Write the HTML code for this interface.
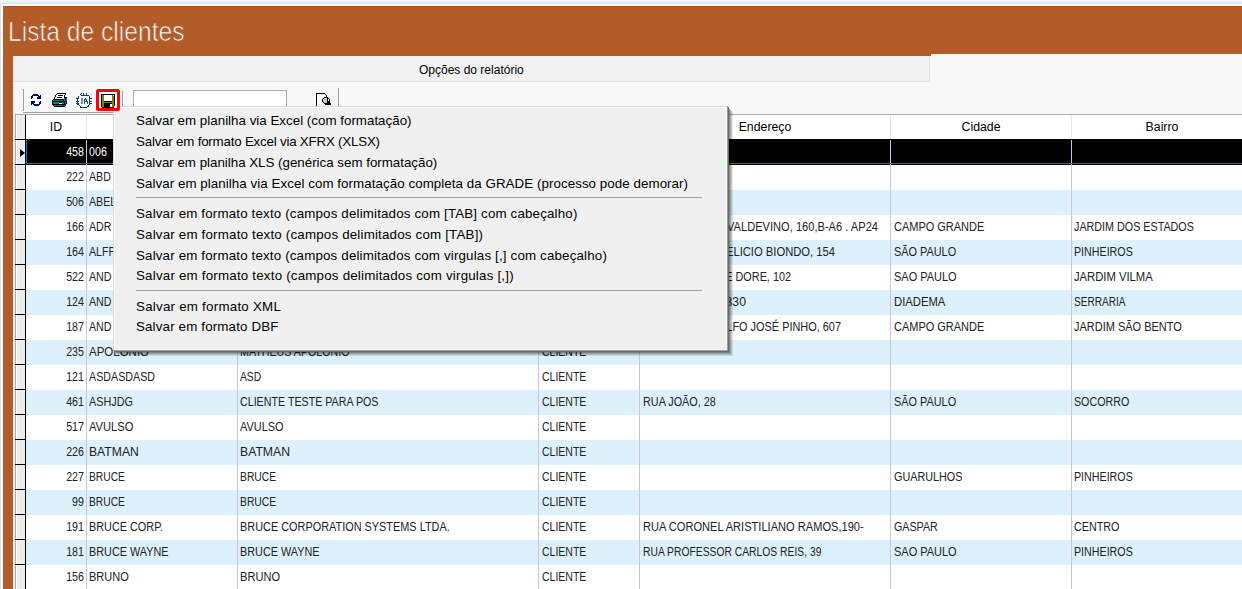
<!DOCTYPE html>
<html><head><meta charset="utf-8">
<style>
html,body{margin:0;padding:0}
body{width:1242px;height:589px;position:relative;overflow:hidden;background:#fff;font-family:"Liberation Sans",sans-serif}
.a{position:absolute}
.ln{position:absolute;height:1px}
.vl{position:absolute;width:1px}
.c{position:absolute;height:24px;line-height:24px;font-size:12px;color:#222;white-space:nowrap;letter-spacing:0px;transform:scaleX(0.89);transform-origin:0 0}
.r{text-align:right;transform-origin:100% 0}
.hd{position:absolute;top:114.5px;height:24px;line-height:24px;font-size:12.3px;color:#000;text-align:center;white-space:nowrap}
.mi{position:absolute;left:136px;font-size:13.35px;color:#000;white-space:nowrap;line-height:16px;letter-spacing:0px}
</style></head><body>

<div class="ln" style="left:0;top:0;width:1242px;background:#fdfdfd"></div>
<div class="a" style="left:0;top:1px;width:1242px;height:2px;background:#efefef"></div>
<div class="ln" style="left:0;top:3px;width:1242px;background:#e1e1e1"></div>
<div class="a" style="left:0;top:4px;width:1242px;height:2px;background:#fcfeff"></div>
<div class="vl" style="left:0;top:3px;height:586px;background:#e1e1e1"></div>
<div class="a" style="left:3px;top:6px;width:1239px;height:583px;background:#b25c2a"></div>
<div class="ln" style="left:3px;top:6px;width:1239px;background:#ad5019"></div>
<div class="a" id="title" style="left:8.1px;top:17.3px;font-size:27.5px;line-height:30px;color:#fff;white-space:nowrap;letter-spacing:0px;-webkit-text-stroke:0.7px #b25c2a;transform:scaleX(0.895);transform-origin:0 0">Lista de clientes</div>
<div class="a" style="left:13px;top:54px;width:1229px;height:535px;background:#f8f8f8"></div>
<div class="a" style="left:13px;top:54px;width:918px;height:2px;background:#b25c2a"></div>
<div class="a" style="left:13px;top:56px;width:916px;height:25px;background:#f2f2f2;border-right:1px solid #e3e3e3;border-bottom:1px solid #e3e3e3"></div>
<div class="a" id="tabtxt" style="left:419px;top:63px;font-size:12px;line-height:14px;color:#000;white-space:nowrap">Opções do relatório</div>
<div class="a" style="left:13px;top:82px;width:2px;height:507px;background:#f6f7f8"></div>
<div class="vl" style="left:23px;top:89px;height:22px;background:#a0a0a0"></div>
<div class="ln" style="left:23px;top:112px;width:320px;background:#a0a0a0"></div>
<div class="vl" style="left:122px;top:91px;height:15px;background:#a0a0a0"></div>
<div class="vl" style="left:338px;top:88px;height:18px;background:#a0a0a0"></div>
<div class="a" style="left:133px;top:90px;width:152px;height:30px;background:#fff;border:1px solid #a9acb5"></div>
<svg class="a" style="left:0;top:0" width="400" height="120" shape-rendering="crispEdges"><rect x="33" y="94" width="5" height="1" fill="#000080"/><rect x="32" y="95" width="7" height="1" fill="#000080"/><rect x="40" y="95" width="1" height="1" fill="#000080"/><rect x="31" y="96" width="2" height="1" fill="#000080"/><rect x="38" y="96" width="3" height="1" fill="#000080"/><rect x="31" y="97" width="2" height="1" fill="#000080"/><rect x="37" y="97" width="4" height="1" fill="#000080"/><rect x="31" y="98" width="1" height="1" fill="#000080"/><rect x="37" y="98" width="4" height="1" fill="#000080"/><rect x="31" y="101" width="4" height="1" fill="#000080"/><rect x="40" y="101" width="1" height="1" fill="#000080"/><rect x="31" y="102" width="4" height="1" fill="#000080"/><rect x="39" y="102" width="2" height="1" fill="#000080"/><rect x="31" y="103" width="3" height="1" fill="#000080"/><rect x="39" y="103" width="2" height="1" fill="#000080"/><rect x="31" y="104" width="1" height="1" fill="#000080"/><rect x="33" y="104" width="7" height="1" fill="#000080"/><rect x="34" y="105" width="5" height="1" fill="#000080"/><rect x="57" y="93" width="9" height="1" fill="#000"/><rect x="56" y="94" width="1" height="1" fill="#000"/><rect x="57" y="94" width="8" height="1" fill="#fff"/><rect x="65" y="94" width="1" height="1" fill="#000"/><rect x="55" y="95" width="1" height="1" fill="#000"/><rect x="56" y="95" width="2" height="1" fill="#fff"/><rect x="58" y="95" width="5" height="1" fill="#000"/><rect x="63" y="95" width="1" height="1" fill="#fff"/><rect x="64" y="95" width="1" height="1" fill="#000"/><rect x="55" y="96" width="1" height="1" fill="#000"/><rect x="56" y="96" width="8" height="1" fill="#fff"/><rect x="64" y="96" width="1" height="1" fill="#000"/><rect x="54" y="97" width="1" height="1" fill="#000"/><rect x="55" y="97" width="2" height="1" fill="#fff"/><rect x="57" y="97" width="5" height="1" fill="#000"/><rect x="62" y="97" width="2" height="1" fill="#fff"/><rect x="64" y="97" width="3" height="1" fill="#000"/><rect x="54" y="98" width="1" height="1" fill="#000"/><rect x="55" y="98" width="9" height="1" fill="#fff"/><rect x="64" y="98" width="1" height="1" fill="#008080"/><rect x="65" y="98" width="1" height="1" fill="#000"/><rect x="66" y="98" width="1" height="1" fill="#008080"/><rect x="53" y="99" width="11" height="1" fill="#000"/><rect x="64" y="99" width="1" height="1" fill="#008080"/><rect x="65" y="99" width="1" height="1" fill="#000"/><rect x="66" y="99" width="1" height="1" fill="#008080"/><rect x="52" y="100" width="1" height="1" fill="#000"/><rect x="53" y="100" width="10" height="1" fill="#008080"/><rect x="63" y="100" width="1" height="1" fill="#000"/><rect x="64" y="100" width="1" height="1" fill="#008080"/><rect x="65" y="100" width="1" height="1" fill="#000"/><rect x="66" y="100" width="1" height="1" fill="#008080"/><rect x="52" y="101" width="13" height="1" fill="#000"/><rect x="65" y="101" width="1" height="1" fill="#008080"/><rect x="66" y="101" width="1" height="1" fill="#000"/><rect x="52" y="102" width="1" height="1" fill="#000"/><rect x="53" y="102" width="6" height="1" fill="#008080"/><rect x="59" y="102" width="3" height="1" fill="#000"/><rect x="62" y="102" width="2" height="1" fill="#008080"/><rect x="64" y="102" width="1" height="1" fill="#000"/><rect x="65" y="102" width="1" height="1" fill="#008080"/><rect x="66" y="102" width="1" height="1" fill="#000"/><rect x="52" y="103" width="1" height="1" fill="#000"/><rect x="53" y="103" width="6" height="1" fill="#008080"/><rect x="59" y="103" width="3" height="1" fill="#ffff00"/><rect x="62" y="103" width="2" height="1" fill="#008080"/><rect x="64" y="103" width="1" height="1" fill="#000"/><rect x="65" y="103" width="1" height="1" fill="#008080"/><rect x="66" y="103" width="1" height="1" fill="#000"/><rect x="52" y="104" width="14" height="1" fill="#000"/><rect x="53" y="105" width="1" height="1" fill="#000"/><rect x="54" y="105" width="9" height="1" fill="#008080"/><rect x="63" y="105" width="1" height="1" fill="#000"/><rect x="64" y="105" width="1" height="1" fill="#008080"/><rect x="65" y="105" width="1" height="1" fill="#000"/><rect x="54" y="106" width="11" height="1" fill="#000"/></svg><svg class="a" style="left:0;top:0" width="100" height="110" shape-rendering="crispEdges"><rect x="81" y="93" width="1" height="1" fill="#0b3b7b"/><rect x="83" y="93" width="1" height="1" fill="#0b3b7b"/><rect x="86" y="93" width="1" height="1" fill="#0b3b7b"/><rect x="80" y="94" width="1" height="1" fill="#0b3b7b"/><rect x="83" y="94" width="1" height="1" fill="#0b3b7b"/><rect x="86" y="94" width="1" height="1" fill="#0b3b7b"/><rect x="81" y="95" width="8" height="1" fill="#0b3b7b"/><rect x="78" y="96" width="1" height="1" fill="#0b3b7b"/><rect x="89" y="96" width="1" height="1" fill="#0b3b7b"/><rect x="78" y="97" width="1" height="1" fill="#0b3b7b"/><rect x="89" y="97" width="1" height="1" fill="#0b3b7b"/><rect x="76" y="98" width="3" height="1" fill="#0b3b7b"/><rect x="89" y="98" width="3" height="1" fill="#0b3b7b"/><rect x="77" y="99" width="1" height="1" fill="#0b3b7b"/><rect x="89" y="99" width="1" height="1" fill="#0b3b7b"/><rect x="77" y="100" width="1" height="1" fill="#0b3b7b"/><rect x="89" y="100" width="1" height="1" fill="#0b3b7b"/><rect x="76" y="101" width="3" height="1" fill="#0b3b7b"/><rect x="89" y="101" width="3" height="1" fill="#0b3b7b"/><rect x="77" y="102" width="1" height="1" fill="#0b3b7b"/><rect x="89" y="102" width="1" height="1" fill="#0b3b7b"/><rect x="76" y="103" width="3" height="1" fill="#0b3b7b"/><rect x="89" y="103" width="3" height="1" fill="#0b3b7b"/><rect x="77" y="104" width="2" height="1" fill="#0b3b7b"/><rect x="89" y="104" width="1" height="1" fill="#0b3b7b"/><rect x="79" y="105" width="1" height="1" fill="#0b3b7b"/><rect x="88" y="105" width="1" height="1" fill="#0b3b7b"/><rect x="80" y="106" width="1" height="1" fill="#0b3b7b"/><rect x="87" y="106" width="2" height="1" fill="#0b3b7b"/><rect x="80" y="107" width="7" height="1" fill="#0b3b7b"/><rect x="81" y="98" width="2" height="1" fill="#6c92c2"/><rect x="85" y="98" width="1" height="1" fill="#24548f"/><rect x="81" y="99" width="2" height="1" fill="#6c92c2"/><rect x="84" y="99" width="3" height="1" fill="#24548f"/><rect x="81" y="100" width="2" height="1" fill="#6c92c2"/><rect x="84" y="100" width="1" height="1" fill="#24548f"/><rect x="86" y="100" width="1" height="1" fill="#24548f"/><rect x="81" y="101" width="2" height="1" fill="#6c92c2"/><rect x="84" y="101" width="4" height="1" fill="#24548f"/><rect x="81" y="102" width="2" height="1" fill="#6c92c2"/><rect x="84" y="102" width="1" height="1" fill="#24548f"/><rect x="87" y="102" width="1" height="1" fill="#24548f"/><rect x="81" y="103" width="2" height="1" fill="#6c92c2"/><rect x="84" y="103" width="1" height="1" fill="#24548f"/><rect x="87" y="103" width="1" height="1" fill="#24548f"/></svg><svg class="a" style="left:0;top:0" width="340" height="110" shape-rendering="crispEdges"><rect x="316" y="93" width="9" height="1" fill="#000"/><rect x="316" y="94" width="1" height="1" fill="#000"/><rect x="325" y="94" width="1" height="1" fill="#000"/><rect x="316" y="95" width="1" height="1" fill="#000"/><rect x="325" y="95" width="1" height="1" fill="#fff"/><rect x="326" y="95" width="1" height="1" fill="#000"/><rect x="316" y="96" width="1" height="1" fill="#000"/><rect x="326" y="96" width="1" height="1" fill="#000"/><rect x="316" y="97" width="1" height="1" fill="#000"/><rect x="324" y="97" width="4" height="1" fill="#000"/><rect x="316" y="98" width="1" height="1" fill="#000"/><rect x="323" y="98" width="1" height="1" fill="#000"/><rect x="324" y="98" width="1" height="1" fill="#d8c4c4"/><rect x="325" y="98" width="1" height="1" fill="#00ffff"/><rect x="326" y="98" width="1" height="1" fill="#d8c4c4"/><rect x="327" y="98" width="2" height="1" fill="#000"/><rect x="316" y="99" width="1" height="1" fill="#000"/><rect x="322" y="99" width="1" height="1" fill="#000"/><rect x="323" y="99" width="1" height="1" fill="#d8c4c4"/><rect x="324" y="99" width="1" height="1" fill="#00ffff"/><rect x="325" y="99" width="2" height="1" fill="#d8c4c4"/><rect x="327" y="99" width="1" height="1" fill="#000"/><rect x="328" y="99" width="1" height="1" fill="#fff"/><rect x="329" y="99" width="1" height="1" fill="#000"/><rect x="316" y="100" width="1" height="1" fill="#000"/><rect x="322" y="100" width="1" height="1" fill="#000"/><rect x="323" y="100" width="4" height="1" fill="#d8c4c4"/><rect x="327" y="100" width="1" height="1" fill="#000"/><rect x="328" y="100" width="1" height="1" fill="#fff"/><rect x="329" y="100" width="1" height="1" fill="#000"/><rect x="316" y="101" width="1" height="1" fill="#000"/><rect x="322" y="101" width="1" height="1" fill="#000"/><rect x="323" y="101" width="3" height="1" fill="#d8c4c4"/><rect x="326" y="101" width="1" height="1" fill="#00ffff"/><rect x="327" y="101" width="3" height="1" fill="#000"/><rect x="316" y="102" width="1" height="1" fill="#000"/><rect x="323" y="102" width="1" height="1" fill="#000"/><rect x="324" y="102" width="1" height="1" fill="#d8c4c4"/><rect x="325" y="102" width="1" height="1" fill="#00ffff"/><rect x="326" y="102" width="1" height="1" fill="#d8c4c4"/><rect x="327" y="102" width="3" height="1" fill="#000"/><rect x="316" y="103" width="1" height="1" fill="#000"/><rect x="324" y="103" width="7" height="1" fill="#000"/><rect x="316" y="104" width="1" height="1" fill="#000"/><rect x="325" y="104" width="6" height="1" fill="#000"/><rect x="316" y="105" width="1" height="1" fill="#000"/></svg>
<div class="ln" style="left:15px;top:114px;width:1227px;background:#a9adb2"></div>
<div class="vl" style="left:15px;top:114px;height:475px;background:#a9adb2"></div>
<div class="a" style="left:16px;top:115px;width:9px;height:474px;background:#ececec"></div>
<div class="vl" style="left:16px;top:115px;height:474px;background:#fff"></div>
<div class="vl" style="left:25px;top:115px;height:474px;background:#000"></div>
<div class="a" style="left:26px;top:115px;width:1216px;height:474px;background:#fff"></div>
<div class="vl" style="left:86px;top:115px;height:24px;background:#e6e6e6"></div>
<div class="vl" style="left:237px;top:115px;height:24px;background:#e6e6e6"></div>
<div class="vl" style="left:538px;top:115px;height:24px;background:#e6e6e6"></div>
<div class="vl" style="left:639px;top:115px;height:24px;background:#e6e6e6"></div>
<div class="vl" style="left:890px;top:115px;height:24px;background:#e6e6e6"></div>
<div class="vl" style="left:1071px;top:115px;height:24px;background:#e6e6e6"></div>
<div class="ln" style="left:15px;top:139px;width:1227px;background:#000"></div>
<div class="hd" style="left:26px;width:60px">ID</div>
<div class="hd" style="left:87px;width:150px">Nome</div>
<div class="hd" style="left:238px;width:300px">Razão social</div>
<div class="hd" style="left:539px;width:100px">Tipo</div>
<div class="hd" style="left:640px;width:250px">Endereço</div>
<div class="hd" style="left:891px;width:180px">Cidade</div>
<div class="hd" style="left:1072px;width:180px">Bairro</div>
<div class="a" style="left:26px;top:140px;width:1216px;height:25px;background:#000"></div>
<div class="ln" style="left:15px;top:164px;width:10px;background:#000"></div>
<div class="vl" style="left:86px;top:140px;height:25px;background:#c9c3e8"></div>
<div class="vl" style="left:237px;top:140px;height:25px;background:#c9c3e8"></div>
<div class="vl" style="left:538px;top:140px;height:25px;background:#c9c3e8"></div>
<div class="vl" style="left:639px;top:140px;height:25px;background:#c9c3e8"></div>
<div class="vl" style="left:890px;top:140px;height:25px;background:#c9c3e8"></div>
<div class="vl" style="left:1071px;top:140px;height:25px;background:#c9c3e8"></div>
<div class="c r" style="left:26px;width:58px;top:140px;color:#fff">458</div>
<div class="c" style="left:89px;top:140px;transform:scaleX(0.8900);color:#fff">006</div>
<div class="ln" style="left:15px;top:189px;width:10px;background:#000"></div>
<div class="vl" style="left:86px;top:165px;height:25px;background:#c9c3e8"></div>
<div class="vl" style="left:237px;top:165px;height:25px;background:#c9c3e8"></div>
<div class="vl" style="left:538px;top:165px;height:25px;background:#c9c3e8"></div>
<div class="vl" style="left:639px;top:165px;height:25px;background:#c9c3e8"></div>
<div class="vl" style="left:890px;top:165px;height:25px;background:#c9c3e8"></div>
<div class="vl" style="left:1071px;top:165px;height:25px;background:#c9c3e8"></div>
<div class="c r" style="left:26px;width:58px;top:165px">222</div>
<div class="c" style="left:89px;top:165px;transform:scaleX(0.8900)">ABD</div>
<div class="a" style="left:26px;top:190px;width:1216px;height:25px;background:#ddf1fc"></div>
<div class="ln" style="left:15px;top:214px;width:10px;background:#000"></div>
<div class="vl" style="left:86px;top:190px;height:25px;background:#c9c3e8"></div>
<div class="vl" style="left:237px;top:190px;height:25px;background:#c9c3e8"></div>
<div class="vl" style="left:538px;top:190px;height:25px;background:#c9c3e8"></div>
<div class="vl" style="left:639px;top:190px;height:25px;background:#c9c3e8"></div>
<div class="vl" style="left:890px;top:190px;height:25px;background:#c9c3e8"></div>
<div class="vl" style="left:1071px;top:190px;height:25px;background:#c9c3e8"></div>
<div class="c r" style="left:26px;width:58px;top:190px">506</div>
<div class="c" style="left:89px;top:190px;transform:scaleX(0.8900)">ABEL</div>
<div class="ln" style="left:15px;top:239px;width:10px;background:#000"></div>
<div class="vl" style="left:86px;top:215px;height:25px;background:#c9c3e8"></div>
<div class="vl" style="left:237px;top:215px;height:25px;background:#c9c3e8"></div>
<div class="vl" style="left:538px;top:215px;height:25px;background:#c9c3e8"></div>
<div class="vl" style="left:639px;top:215px;height:25px;background:#c9c3e8"></div>
<div class="vl" style="left:890px;top:215px;height:25px;background:#c9c3e8"></div>
<div class="vl" style="left:1071px;top:215px;height:25px;background:#c9c3e8"></div>
<div class="c r" style="left:26px;width:58px;top:215px">166</div>
<div class="c" style="left:89px;top:215px;transform:scaleX(0.8900)">ADR</div>
<div class="c" style="left:893.5px;top:215px;transform:scaleX(0.9152)">CAMPO GRANDE</div>
<div class="c" style="left:1074px;top:215px;transform:scaleX(0.8960)">JARDIM DOS ESTADOS</div>
<div class="c r" style="left:577.8px;width:300px;top:215px;transform:scaleX(0.9252)">RUA ANTONIO VALDEVINO, 160,B-A6 . AP24</div>
<div class="a" style="left:26px;top:240px;width:1216px;height:25px;background:#ddf1fc"></div>
<div class="ln" style="left:15px;top:264px;width:10px;background:#000"></div>
<div class="vl" style="left:86px;top:240px;height:25px;background:#c9c3e8"></div>
<div class="vl" style="left:237px;top:240px;height:25px;background:#c9c3e8"></div>
<div class="vl" style="left:538px;top:240px;height:25px;background:#c9c3e8"></div>
<div class="vl" style="left:639px;top:240px;height:25px;background:#c9c3e8"></div>
<div class="vl" style="left:890px;top:240px;height:25px;background:#c9c3e8"></div>
<div class="vl" style="left:1071px;top:240px;height:25px;background:#c9c3e8"></div>
<div class="c r" style="left:26px;width:58px;top:240px">164</div>
<div class="c" style="left:89px;top:240px;transform:scaleX(0.8900)">ALFF</div>
<div class="c" style="left:893.5px;top:240px;transform:scaleX(0.9074)">SÃO PAULO</div>
<div class="c" style="left:1074px;top:240px;transform:scaleX(0.8900)">PINHEIROS</div>
<div class="c r" style="left:535.4px;width:300px;top:240px;transform:scaleX(0.9345)">RUA FELICIO BIONDO, 154</div>
<div class="ln" style="left:15px;top:289px;width:10px;background:#000"></div>
<div class="vl" style="left:86px;top:265px;height:25px;background:#c9c3e8"></div>
<div class="vl" style="left:237px;top:265px;height:25px;background:#c9c3e8"></div>
<div class="vl" style="left:538px;top:265px;height:25px;background:#c9c3e8"></div>
<div class="vl" style="left:639px;top:265px;height:25px;background:#c9c3e8"></div>
<div class="vl" style="left:890px;top:265px;height:25px;background:#c9c3e8"></div>
<div class="vl" style="left:1071px;top:265px;height:25px;background:#c9c3e8"></div>
<div class="c r" style="left:26px;width:58px;top:265px">522</div>
<div class="c" style="left:89px;top:265px;transform:scaleX(0.8900)">AND</div>
<div class="c" style="left:893.5px;top:265px;transform:scaleX(0.9146)">SAO PAULO</div>
<div class="c" style="left:1074px;top:265px;transform:scaleX(0.9363)">JARDIM VILMA</div>
<div class="c r" style="left:491.20000000000005px;width:300px;top:265px;transform:scaleX(0.9042)">RUA JOSE DORE, 102</div>
<div class="a" style="left:26px;top:290px;width:1216px;height:25px;background:#ddf1fc"></div>
<div class="ln" style="left:15px;top:314px;width:10px;background:#000"></div>
<div class="vl" style="left:86px;top:290px;height:25px;background:#c9c3e8"></div>
<div class="vl" style="left:237px;top:290px;height:25px;background:#c9c3e8"></div>
<div class="vl" style="left:538px;top:290px;height:25px;background:#c9c3e8"></div>
<div class="vl" style="left:639px;top:290px;height:25px;background:#c9c3e8"></div>
<div class="vl" style="left:890px;top:290px;height:25px;background:#c9c3e8"></div>
<div class="vl" style="left:1071px;top:290px;height:25px;background:#c9c3e8"></div>
<div class="c r" style="left:26px;width:58px;top:290px">124</div>
<div class="c" style="left:89px;top:290px;transform:scaleX(0.8900)">AND</div>
<div class="c" style="left:893.5px;top:290px;transform:scaleX(0.9388)">DIADEMA</div>
<div class="c" style="left:1074px;top:290px;transform:scaleX(0.8383)">SERRARIA</div>
<div class="c r" style="left:446.4px;width:300px;top:290px;transform:scaleX(1.0211)">RUA DAS FLORES, 330</div>
<div class="ln" style="left:15px;top:339px;width:10px;background:#000"></div>
<div class="vl" style="left:86px;top:315px;height:25px;background:#c9c3e8"></div>
<div class="vl" style="left:237px;top:315px;height:25px;background:#c9c3e8"></div>
<div class="vl" style="left:538px;top:315px;height:25px;background:#c9c3e8"></div>
<div class="vl" style="left:639px;top:315px;height:25px;background:#c9c3e8"></div>
<div class="vl" style="left:890px;top:315px;height:25px;background:#c9c3e8"></div>
<div class="vl" style="left:1071px;top:315px;height:25px;background:#c9c3e8"></div>
<div class="c r" style="left:26px;width:58px;top:315px">187</div>
<div class="c" style="left:89px;top:315px;transform:scaleX(0.8900)">AND</div>
<div class="c" style="left:893.5px;top:315px;transform:scaleX(0.9152)">CAMPO GRANDE</div>
<div class="c" style="left:1074px;top:315px;transform:scaleX(0.9148)">JARDIM SÃO BENTO</div>
<div class="c r" style="left:540.7px;width:300px;top:315px;transform:scaleX(0.9096)">RUA ADOLFO JOSÉ PINHO, 607</div>
<div class="a" style="left:26px;top:340px;width:1216px;height:25px;background:#ddf1fc"></div>
<div class="ln" style="left:15px;top:364px;width:10px;background:#000"></div>
<div class="vl" style="left:86px;top:340px;height:25px;background:#c9c3e8"></div>
<div class="vl" style="left:237px;top:340px;height:25px;background:#c9c3e8"></div>
<div class="vl" style="left:538px;top:340px;height:25px;background:#c9c3e8"></div>
<div class="vl" style="left:639px;top:340px;height:25px;background:#c9c3e8"></div>
<div class="vl" style="left:890px;top:340px;height:25px;background:#c9c3e8"></div>
<div class="vl" style="left:1071px;top:340px;height:25px;background:#c9c3e8"></div>
<div class="c r" style="left:26px;width:58px;top:340px">235</div>
<div class="c" style="left:89px;top:340px;transform:scaleX(0.9580)">APOLONIO</div>
<div class="c" style="left:240px;top:340px;transform:scaleX(0.8900)">MATHEUS APOLONIO</div>
<div class="c" style="left:541.5px;top:340px;transform:scaleX(0.8745)">CLIENTE</div>
<div class="ln" style="left:15px;top:389px;width:10px;background:#000"></div>
<div class="vl" style="left:86px;top:365px;height:25px;background:#c9c3e8"></div>
<div class="vl" style="left:237px;top:365px;height:25px;background:#c9c3e8"></div>
<div class="vl" style="left:538px;top:365px;height:25px;background:#c9c3e8"></div>
<div class="vl" style="left:639px;top:365px;height:25px;background:#c9c3e8"></div>
<div class="vl" style="left:890px;top:365px;height:25px;background:#c9c3e8"></div>
<div class="vl" style="left:1071px;top:365px;height:25px;background:#c9c3e8"></div>
<div class="c r" style="left:26px;width:58px;top:365px">121</div>
<div class="c" style="left:89px;top:365px;transform:scaleX(0.8928)">ASDASDASD</div>
<div class="c" style="left:240px;top:365px;transform:scaleX(0.8583)">ASD</div>
<div class="c" style="left:541.5px;top:365px;transform:scaleX(0.8745)">CLIENTE</div>
<div class="a" style="left:26px;top:390px;width:1216px;height:25px;background:#ddf1fc"></div>
<div class="ln" style="left:15px;top:414px;width:10px;background:#000"></div>
<div class="vl" style="left:86px;top:390px;height:25px;background:#c9c3e8"></div>
<div class="vl" style="left:237px;top:390px;height:25px;background:#c9c3e8"></div>
<div class="vl" style="left:538px;top:390px;height:25px;background:#c9c3e8"></div>
<div class="vl" style="left:639px;top:390px;height:25px;background:#c9c3e8"></div>
<div class="vl" style="left:890px;top:390px;height:25px;background:#c9c3e8"></div>
<div class="vl" style="left:1071px;top:390px;height:25px;background:#c9c3e8"></div>
<div class="c r" style="left:26px;width:58px;top:390px">461</div>
<div class="c" style="left:89px;top:390px;transform:scaleX(0.9027)">ASHJDG</div>
<div class="c" style="left:240px;top:390px;transform:scaleX(0.8900)">CLIENTE TESTE PARA POS</div>
<div class="c" style="left:541.5px;top:390px;transform:scaleX(0.8745)">CLIENTE</div>
<div class="c" style="left:893.5px;top:390px;transform:scaleX(0.9074)">SÃO PAULO</div>
<div class="c" style="left:1074px;top:390px;transform:scaleX(0.8901)">SOCORRO</div>
<div class="c" style="left:642.5px;top:390px;transform:scaleX(0.9024)">RUA JOÃO, 28</div>
<div class="ln" style="left:15px;top:439px;width:10px;background:#000"></div>
<div class="vl" style="left:86px;top:415px;height:25px;background:#c9c3e8"></div>
<div class="vl" style="left:237px;top:415px;height:25px;background:#c9c3e8"></div>
<div class="vl" style="left:538px;top:415px;height:25px;background:#c9c3e8"></div>
<div class="vl" style="left:639px;top:415px;height:25px;background:#c9c3e8"></div>
<div class="vl" style="left:890px;top:415px;height:25px;background:#c9c3e8"></div>
<div class="vl" style="left:1071px;top:415px;height:25px;background:#c9c3e8"></div>
<div class="c r" style="left:26px;width:58px;top:415px">517</div>
<div class="c" style="left:89px;top:415px;transform:scaleX(0.9283)">AVULSO</div>
<div class="c" style="left:240px;top:415px;transform:scaleX(0.9114)">AVULSO</div>
<div class="c" style="left:541.5px;top:415px;transform:scaleX(0.8745)">CLIENTE</div>
<div class="a" style="left:26px;top:440px;width:1216px;height:25px;background:#ddf1fc"></div>
<div class="ln" style="left:15px;top:464px;width:10px;background:#000"></div>
<div class="vl" style="left:86px;top:440px;height:25px;background:#c9c3e8"></div>
<div class="vl" style="left:237px;top:440px;height:25px;background:#c9c3e8"></div>
<div class="vl" style="left:538px;top:440px;height:25px;background:#c9c3e8"></div>
<div class="vl" style="left:639px;top:440px;height:25px;background:#c9c3e8"></div>
<div class="vl" style="left:890px;top:440px;height:25px;background:#c9c3e8"></div>
<div class="vl" style="left:1071px;top:440px;height:25px;background:#c9c3e8"></div>
<div class="c r" style="left:26px;width:58px;top:440px">226</div>
<div class="c" style="left:89px;top:440px;transform:scaleX(1.0144)">BATMAN</div>
<div class="c" style="left:240px;top:440px;transform:scaleX(1.0185)">BATMAN</div>
<div class="c" style="left:541.5px;top:440px;transform:scaleX(0.8745)">CLIENTE</div>
<div class="ln" style="left:15px;top:489px;width:10px;background:#000"></div>
<div class="vl" style="left:86px;top:465px;height:25px;background:#c9c3e8"></div>
<div class="vl" style="left:237px;top:465px;height:25px;background:#c9c3e8"></div>
<div class="vl" style="left:538px;top:465px;height:25px;background:#c9c3e8"></div>
<div class="vl" style="left:639px;top:465px;height:25px;background:#c9c3e8"></div>
<div class="vl" style="left:890px;top:465px;height:25px;background:#c9c3e8"></div>
<div class="vl" style="left:1071px;top:465px;height:25px;background:#c9c3e8"></div>
<div class="c r" style="left:26px;width:58px;top:465px">227</div>
<div class="c" style="left:89px;top:465px;transform:scaleX(0.8564)">BRUCE</div>
<div class="c" style="left:240px;top:465px;transform:scaleX(0.8614)">BRUCE</div>
<div class="c" style="left:541.5px;top:465px;transform:scaleX(0.8745)">CLIENTE</div>
<div class="c" style="left:893.5px;top:465px;transform:scaleX(0.9006)">GUARULHOS</div>
<div class="c" style="left:1074px;top:465px;transform:scaleX(0.8900)">PINHEIROS</div>
<div class="a" style="left:26px;top:490px;width:1216px;height:25px;background:#ddf1fc"></div>
<div class="ln" style="left:15px;top:514px;width:10px;background:#000"></div>
<div class="vl" style="left:86px;top:490px;height:25px;background:#c9c3e8"></div>
<div class="vl" style="left:237px;top:490px;height:25px;background:#c9c3e8"></div>
<div class="vl" style="left:538px;top:490px;height:25px;background:#c9c3e8"></div>
<div class="vl" style="left:639px;top:490px;height:25px;background:#c9c3e8"></div>
<div class="vl" style="left:890px;top:490px;height:25px;background:#c9c3e8"></div>
<div class="vl" style="left:1071px;top:490px;height:25px;background:#c9c3e8"></div>
<div class="c r" style="left:26px;width:58px;top:490px">99</div>
<div class="c" style="left:89px;top:490px;transform:scaleX(0.8564)">BRUCE</div>
<div class="c" style="left:240px;top:490px;transform:scaleX(0.8614)">BRUCE</div>
<div class="c" style="left:541.5px;top:490px;transform:scaleX(0.8745)">CLIENTE</div>
<div class="ln" style="left:15px;top:539px;width:10px;background:#000"></div>
<div class="vl" style="left:86px;top:515px;height:25px;background:#c9c3e8"></div>
<div class="vl" style="left:237px;top:515px;height:25px;background:#c9c3e8"></div>
<div class="vl" style="left:538px;top:515px;height:25px;background:#c9c3e8"></div>
<div class="vl" style="left:639px;top:515px;height:25px;background:#c9c3e8"></div>
<div class="vl" style="left:890px;top:515px;height:25px;background:#c9c3e8"></div>
<div class="vl" style="left:1071px;top:515px;height:25px;background:#c9c3e8"></div>
<div class="c r" style="left:26px;width:58px;top:515px">191</div>
<div class="c" style="left:89px;top:515px;transform:scaleX(0.9049)">BRUCE CORP.</div>
<div class="c" style="left:240px;top:515px;transform:scaleX(0.9082)">BRUCE CORPORATION SYSTEMS LTDA.</div>
<div class="c" style="left:541.5px;top:515px;transform:scaleX(0.8745)">CLIENTE</div>
<div class="c" style="left:893.5px;top:515px;transform:scaleX(0.8900)">GASPAR</div>
<div class="c" style="left:1074px;top:515px;transform:scaleX(0.8981)">CENTRO</div>
<div class="c" style="left:642.5px;top:515px;transform:scaleX(0.9235)">RUA CORONEL ARISTILIANO RAMOS,190-</div>
<div class="a" style="left:26px;top:540px;width:1216px;height:25px;background:#ddf1fc"></div>
<div class="ln" style="left:15px;top:564px;width:10px;background:#000"></div>
<div class="vl" style="left:86px;top:540px;height:25px;background:#c9c3e8"></div>
<div class="vl" style="left:237px;top:540px;height:25px;background:#c9c3e8"></div>
<div class="vl" style="left:538px;top:540px;height:25px;background:#c9c3e8"></div>
<div class="vl" style="left:639px;top:540px;height:25px;background:#c9c3e8"></div>
<div class="vl" style="left:890px;top:540px;height:25px;background:#c9c3e8"></div>
<div class="vl" style="left:1071px;top:540px;height:25px;background:#c9c3e8"></div>
<div class="c r" style="left:26px;width:58px;top:540px">181</div>
<div class="c" style="left:89px;top:540px;transform:scaleX(0.9037)">BRUCE WAYNE</div>
<div class="c" style="left:240px;top:540px;transform:scaleX(0.9037)">BRUCE WAYNE</div>
<div class="c" style="left:541.5px;top:540px;transform:scaleX(0.8745)">CLIENTE</div>
<div class="c" style="left:893.5px;top:540px;transform:scaleX(0.9146)">SAO PAULO</div>
<div class="c" style="left:1074px;top:540px;transform:scaleX(0.8900)">PINHEIROS</div>
<div class="c" style="left:642.5px;top:540px;transform:scaleX(0.8601)">RUA PROFESSOR CARLOS REIS, 39</div>
<div class="ln" style="left:15px;top:589px;width:10px;background:#000"></div>
<div class="vl" style="left:86px;top:565px;height:25px;background:#c9c3e8"></div>
<div class="vl" style="left:237px;top:565px;height:25px;background:#c9c3e8"></div>
<div class="vl" style="left:538px;top:565px;height:25px;background:#c9c3e8"></div>
<div class="vl" style="left:639px;top:565px;height:25px;background:#c9c3e8"></div>
<div class="vl" style="left:890px;top:565px;height:25px;background:#c9c3e8"></div>
<div class="vl" style="left:1071px;top:565px;height:25px;background:#c9c3e8"></div>
<div class="c r" style="left:26px;width:58px;top:565px">156</div>
<div class="c" style="left:89px;top:565px;transform:scaleX(0.9182)">BRUNO</div>
<div class="c" style="left:240px;top:565px;transform:scaleX(0.9230)">BRUNO</div>
<div class="c" style="left:541.5px;top:565px;transform:scaleX(0.8745)">CLIENTE</div>
<div class="vl" style="left:26px;top:140px;height:24px;background:#0a76d6"></div>
<div class="ln" style="left:26px;top:163px;width:1216px;background:#0a76d6"></div>
<div class="a" style="left:20px;top:149px;width:0;height:0;border-top:4px solid transparent;border-bottom:4px solid transparent;border-left:5px solid #000"></div>
<div class="a" style="left:113px;top:106px;width:614px;height:244px;background:#f0f0f0"></div>
<div class="ln" style="left:113px;top:106px;width:614px;background:#dadada"></div>
<div class="vl" style="left:113px;top:106px;height:244px;background:#dadada"></div>
<div class="ln" style="left:114px;top:107px;width:612px;background:#fff"></div>
<div class="vl" style="left:114px;top:107px;height:242px;background:#fff"></div>
<div class="vl" style="left:726px;top:107px;height:243px;background:#f4f4f4"></div>
<div class="ln" style="left:114px;top:349px;width:613px;background:#f4f4f4"></div>
<div class="vl" style="left:727px;top:106px;height:245px;background:#9a9a9a"></div>
<div class="ln" style="left:113px;top:350px;width:615px;background:#a0a0a0"></div>
<div class="vl" style="left:728px;top:107px;height:245px;background:#6a6a6a"></div>
<div class="ln" style="left:114px;top:351px;width:615px;background:#686868"></div>
<div class="vl" style="left:729px;top:109px;height:243px;background:rgba(0,0,0,0.45)"></div>
<div class="ln" style="left:116px;top:352px;width:613px;background:rgba(0,0,0,0.45)"></div>
<div class="vl" style="left:730px;top:110px;height:242px;background:rgba(0,0,0,0.33)"></div>
<div class="ln" style="left:117px;top:353px;width:612px;background:rgba(0,0,0,0.33)"></div>
<div class="vl" style="left:731px;top:111px;height:241px;background:rgba(0,0,0,0.21)"></div>
<div class="ln" style="left:118px;top:354px;width:611px;background:rgba(0,0,0,0.21)"></div>
<div class="vl" style="left:732px;top:112px;height:240px;background:rgba(0,0,0,0.1)"></div>
<div class="ln" style="left:119px;top:355px;width:610px;background:rgba(0,0,0,0.1)"></div>
<div class="a" style="left:729px;top:352px;width:1px;height:1px;background:rgba(0,0,0,0.450)"></div>
<div class="a" style="left:729px;top:353px;width:1px;height:1px;background:rgba(0,0,0,0.330)"></div>
<div class="a" style="left:729px;top:354px;width:1px;height:1px;background:rgba(0,0,0,0.210)"></div>
<div class="a" style="left:729px;top:355px;width:1px;height:1px;background:rgba(0,0,0,0.100)"></div>
<div class="a" style="left:730px;top:352px;width:1px;height:1px;background:rgba(0,0,0,0.330)"></div>
<div class="a" style="left:730px;top:353px;width:1px;height:1px;background:rgba(0,0,0,0.281)"></div>
<div class="a" style="left:730px;top:354px;width:1px;height:1px;background:rgba(0,0,0,0.210)"></div>
<div class="a" style="left:730px;top:355px;width:1px;height:1px;background:rgba(0,0,0,0.100)"></div>
<div class="a" style="left:731px;top:352px;width:1px;height:1px;background:rgba(0,0,0,0.210)"></div>
<div class="a" style="left:731px;top:353px;width:1px;height:1px;background:rgba(0,0,0,0.210)"></div>
<div class="a" style="left:731px;top:354px;width:1px;height:1px;background:rgba(0,0,0,0.178)"></div>
<div class="a" style="left:731px;top:355px;width:1px;height:1px;background:rgba(0,0,0,0.100)"></div>
<div class="a" style="left:732px;top:352px;width:1px;height:1px;background:rgba(0,0,0,0.100)"></div>
<div class="a" style="left:732px;top:353px;width:1px;height:1px;background:rgba(0,0,0,0.100)"></div>
<div class="a" style="left:732px;top:354px;width:1px;height:1px;background:rgba(0,0,0,0.100)"></div>
<div class="a" style="left:732px;top:355px;width:1px;height:1px;background:rgba(0,0,0,0.085)"></div>
<div class="mi" style="top:112.7px;letter-spacing:0.009px">Salvar em planilha via Excel (com formatação)</div>
<div class="mi" style="top:133.8px;letter-spacing:-0.213px">Salvar em formato Excel via XFRX (XLSX)</div>
<div class="mi" style="top:154.8px;letter-spacing:-0.013px">Salvar em planilha XLS (genérica sem formatação)</div>
<div class="mi" style="top:175.7px;letter-spacing:0.056px">Salvar em planilha via Excel com formatação completa da GRADE (processo pode demorar)</div>
<div class="mi" style="top:205.8px;letter-spacing:0.160px">Salvar em formato texto (campos delimitados com [TAB] com cabeçalho)</div>
<div class="mi" style="top:226.7px;letter-spacing:0.185px">Salvar em formato texto (campos delimitados com [TAB])</div>
<div class="mi" style="top:247.5px;letter-spacing:0.159px">Salvar em formato texto (campos delimitados com virgulas [,] com cabeçalho)</div>
<div class="mi" style="top:268.4px;letter-spacing:0.200px">Salvar em formato texto (campos delimitados com virgulas [,])</div>
<div class="mi" style="top:298.5px;letter-spacing:0.235px">Salvar em formato XML</div>
<div class="mi" style="top:319.4px;letter-spacing:0.150px">Salvar em formato DBF</div>
<div class="ln" style="left:136px;top:197px;width:566px;background:#a0a0a0"></div>
<div class="ln" style="left:136px;top:290px;width:566px;background:#a0a0a0"></div>
<svg class="a" style="left:90px;top:85px" width="35" height="30" shape-rendering="crispEdges"><rect x="7.5" y="5.5" width="21" height="19" rx="1" fill="#fff" stroke="#f00" stroke-width="3" shape-rendering="geometricPrecision"/><rect x="11" y="9" width="14" height="1" fill="#000"/><rect x="11" y="10" width="1" height="1" fill="#000"/><rect x="12" y="10" width="2" height="1" fill="#808000"/><rect x="14" y="10" width="8" height="1" fill="#fff"/><rect x="22" y="10" width="1" height="1" fill="#808000"/><rect x="23" y="10" width="1" height="1" fill="#fff"/><rect x="24" y="10" width="1" height="1" fill="#000"/><rect x="11" y="11" width="1" height="1" fill="#000"/><rect x="12" y="11" width="2" height="1" fill="#808000"/><rect x="14" y="11" width="8" height="1" fill="#fff"/><rect x="22" y="11" width="2" height="1" fill="#808000"/><rect x="24" y="11" width="1" height="1" fill="#000"/><rect x="11" y="12" width="1" height="1" fill="#000"/><rect x="12" y="12" width="2" height="1" fill="#808000"/><rect x="14" y="12" width="8" height="1" fill="#fff"/><rect x="22" y="12" width="2" height="1" fill="#808000"/><rect x="24" y="12" width="1" height="1" fill="#000"/><rect x="11" y="13" width="1" height="1" fill="#000"/><rect x="12" y="13" width="2" height="1" fill="#808000"/><rect x="14" y="13" width="8" height="1" fill="#fff"/><rect x="22" y="13" width="2" height="1" fill="#808000"/><rect x="24" y="13" width="1" height="1" fill="#000"/><rect x="11" y="14" width="1" height="1" fill="#000"/><rect x="12" y="14" width="2" height="1" fill="#808000"/><rect x="14" y="14" width="8" height="1" fill="#fff"/><rect x="22" y="14" width="2" height="1" fill="#808000"/><rect x="24" y="14" width="1" height="1" fill="#000"/><rect x="11" y="15" width="1" height="1" fill="#000"/><rect x="12" y="15" width="2" height="1" fill="#808000"/><rect x="14" y="15" width="8" height="1" fill="#fff"/><rect x="22" y="15" width="2" height="1" fill="#808000"/><rect x="24" y="15" width="1" height="1" fill="#000"/><rect x="11" y="16" width="1" height="1" fill="#000"/><rect x="12" y="16" width="2" height="1" fill="#808000"/><rect x="14" y="16" width="8" height="1" fill="#000"/><rect x="22" y="16" width="2" height="1" fill="#808000"/><rect x="24" y="16" width="1" height="1" fill="#000"/><rect x="11" y="17" width="1" height="1" fill="#000"/><rect x="12" y="17" width="12" height="1" fill="#808000"/><rect x="24" y="17" width="1" height="1" fill="#000"/><rect x="11" y="18" width="1" height="1" fill="#000"/><rect x="12" y="18" width="2" height="1" fill="#808000"/><rect x="14" y="18" width="8" height="1" fill="#000"/><rect x="22" y="18" width="2" height="1" fill="#808000"/><rect x="24" y="18" width="1" height="1" fill="#000"/><rect x="11" y="19" width="1" height="1" fill="#000"/><rect x="12" y="19" width="2" height="1" fill="#808000"/><rect x="14" y="19" width="6" height="1" fill="#000"/><rect x="20" y="19" width="2" height="1" fill="#fff"/><rect x="22" y="19" width="2" height="1" fill="#808000"/><rect x="24" y="19" width="1" height="1" fill="#000"/><rect x="11" y="20" width="1" height="1" fill="#000"/><rect x="12" y="20" width="2" height="1" fill="#808000"/><rect x="14" y="20" width="6" height="1" fill="#000"/><rect x="20" y="20" width="2" height="1" fill="#fff"/><rect x="22" y="20" width="2" height="1" fill="#808000"/><rect x="24" y="20" width="1" height="1" fill="#000"/><rect x="11" y="21" width="1" height="1" fill="#000"/><rect x="12" y="21" width="2" height="1" fill="#808000"/><rect x="14" y="21" width="6" height="1" fill="#000"/><rect x="20" y="21" width="2" height="1" fill="#fff"/><rect x="22" y="21" width="2" height="1" fill="#808000"/><rect x="12" y="22" width="12" height="1" fill="#000"/></svg>
</body></html>
